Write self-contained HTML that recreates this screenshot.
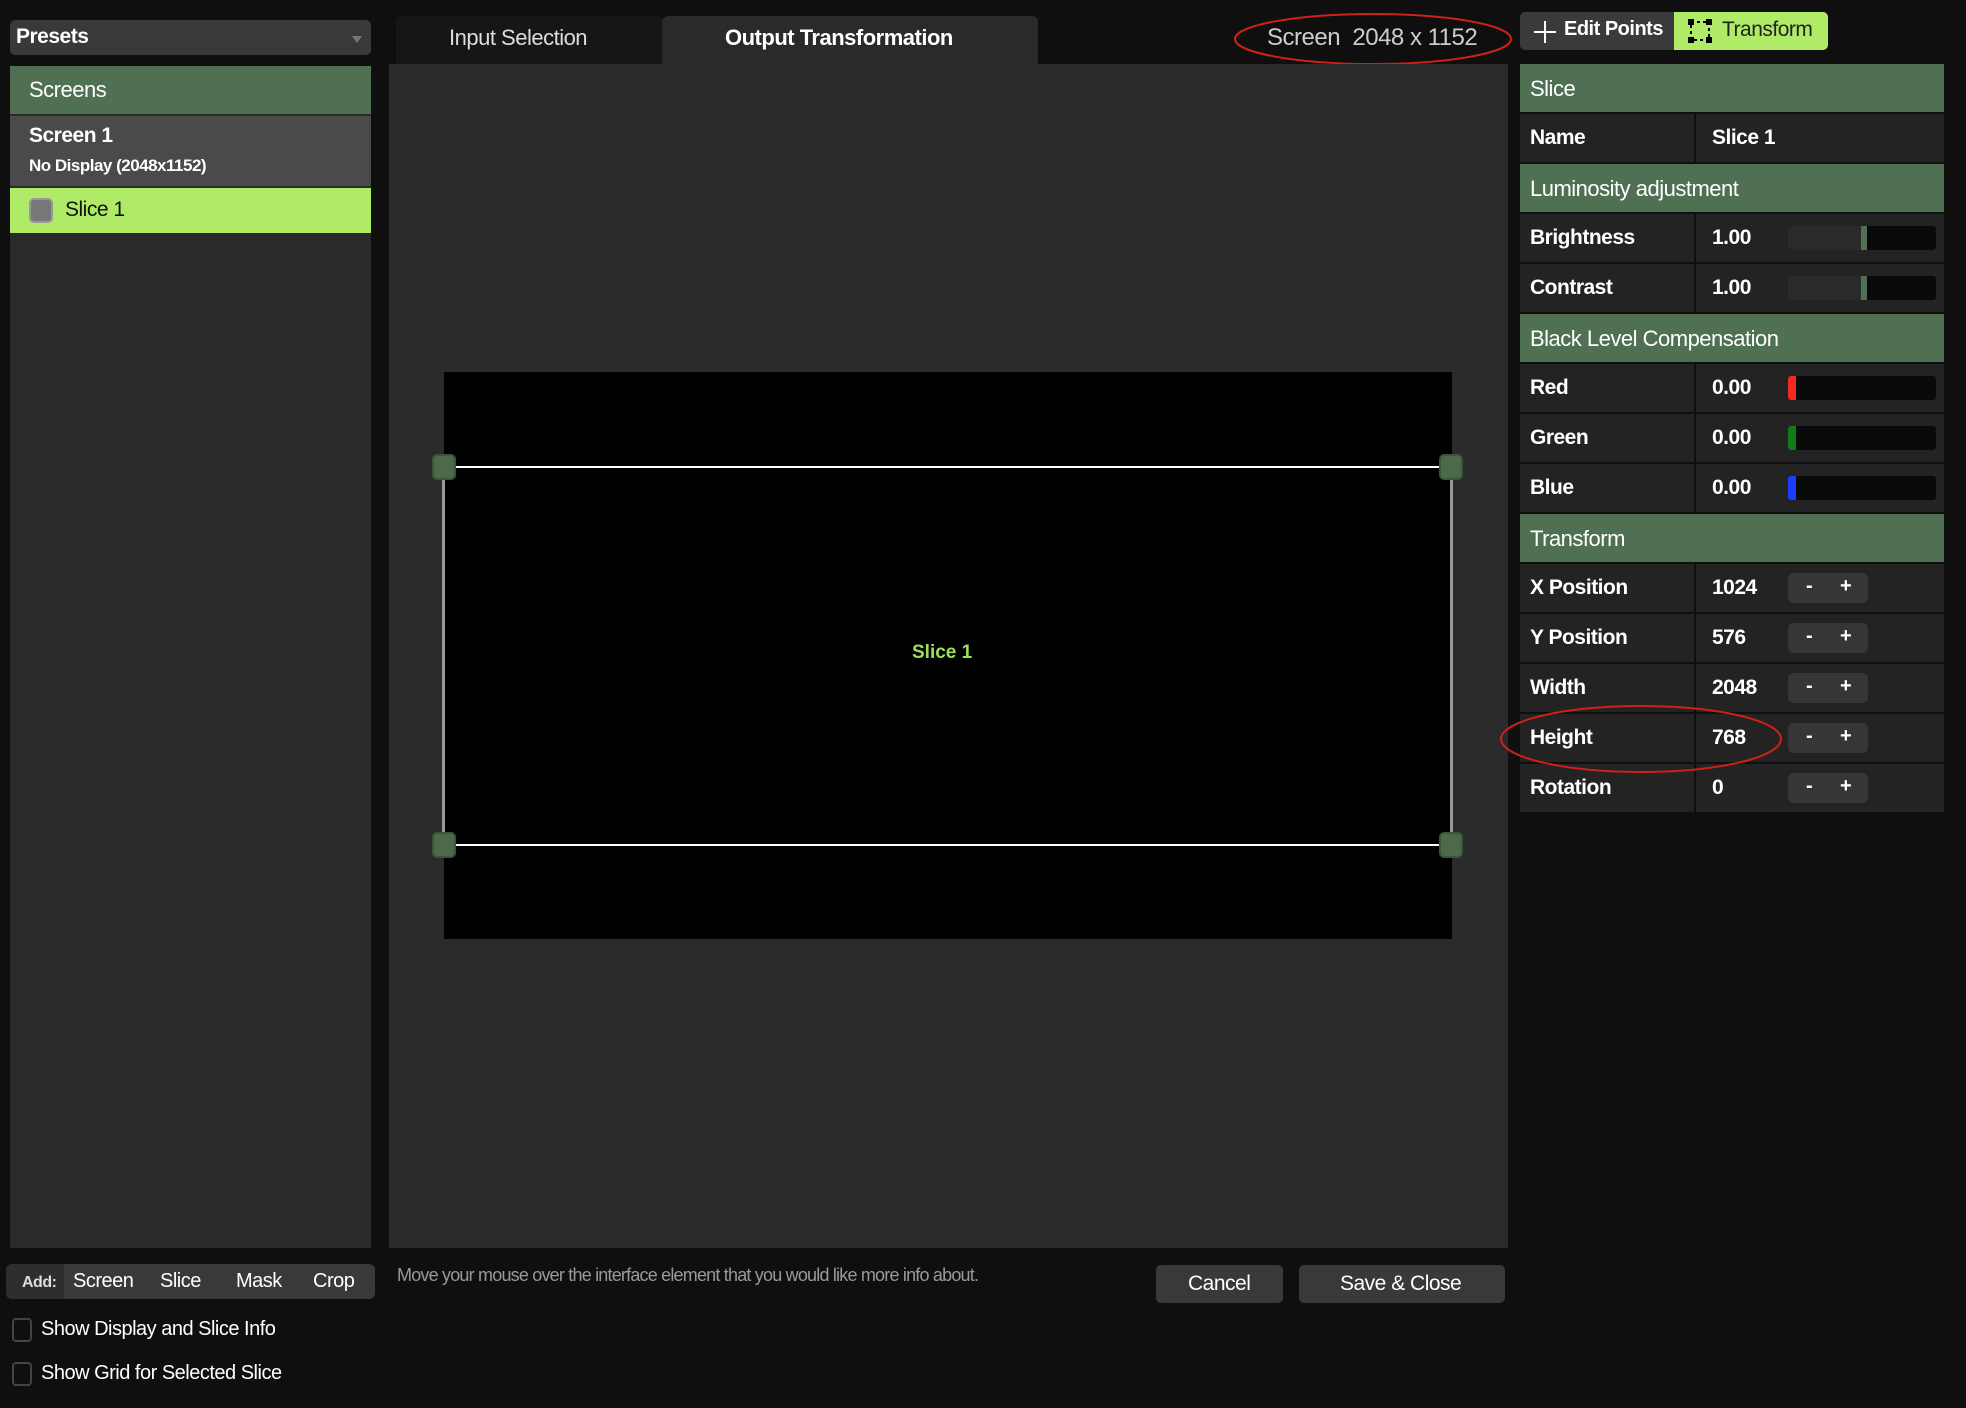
<!DOCTYPE html>
<html><head><meta charset="utf-8"><style>
*{margin:0;padding:0;box-sizing:border-box}
body{width:1966px;height:1408px;background:#0f0f0f;position:relative;overflow:hidden;font-family:"Liberation Sans",sans-serif;color:#fff}
.a{position:absolute}
.t{font-size:21px;font-weight:bold;letter-spacing:-0.5px;white-space:nowrap}
.hdr{background:#4f7052}
.row{background:#232323}
.lab{position:absolute;left:10px;top:12px}
.sl{position:absolute;left:268px;top:12px;width:148px;height:24px;border-radius:3px;background:#0a0a0a;overflow:hidden}
.pm{position:absolute;left:268px;top:9px;width:80px;height:30px;border-radius:5px;background:#363636;font-size:20px;font-weight:bold}
.pm span{position:absolute;top:2px}
.h{position:absolute;width:24px;height:26px;background:#4a6a4a;border:2px solid #3a553a;border-radius:5px}
</style></head><body>
<div class="a" style="left:10px;top:20px;width:361px;height:35px;background:#393939;border-radius:5px"></div>
<div class="a t" style="left:16px;top:25px;font-size:21px">Presets</div>
<div class="a" style="left:352px;top:36px;border:5px solid transparent;border-top:7px solid #777"></div>
<div class="a" style="left:10px;top:66px;width:361px;height:1182px;background:#2a2a2a"></div>
<div class="a hdr" style="left:10px;top:66px;width:361px;height:48px"></div>
<div class="a t" style="left:29px;top:77px;font-weight:normal;font-size:22px">Screens</div>
<div class="a" style="left:10px;top:116px;width:361px;height:70px;background:#4a4a4a"></div>
<div class="a t" style="left:29px;top:124px">Screen 1</div>
<div class="a t" style="left:29px;top:156px;font-size:17px;font-weight:bold">No Display (2048x1152)</div>
<div class="a" style="left:10px;top:188px;width:361px;height:45px;background:#b0eb68"></div>
<div class="a" style="left:29px;top:198px;width:24px;height:25px;background:#777;border:2px solid #999;border-radius:5px"></div>
<div class="a t" style="left:65px;top:198px;color:#111;font-weight:normal">Slice 1</div>
<div class="a" style="left:396px;top:16px;width:266px;height:48px;background:#161616;border-radius:6px 6px 0 0"></div>
<div class="a t" style="left:449px;top:25px;color:#ddd;font-weight:normal;font-size:22px">Input Selection</div>
<div class="a" style="left:662px;top:16px;width:376px;height:48px;background:#2a2a2a;border-radius:6px 6px 0 0"></div>
<div class="a t" style="left:725px;top:25px;font-size:22px">Output Transformation</div>
<div class="a t" style="left:1267px;top:24px;color:#ccc;font-weight:normal;font-size:24px">Screen&nbsp; 2048 x 1152</div>
<svg class="a" style="left:1230px;top:10px" width="290" height="60"><ellipse cx="143" cy="29" rx="138" ry="25" fill="none" stroke="#d0201a" stroke-width="2"/></svg>
<div class="a" style="left:389px;top:64px;width:1119px;height:1184px;background:#2a2a2a"></div>
<div class="a" style="left:444px;top:372px;width:1008px;height:567px;background:#000"></div>
<div class="a" style="left:444px;top:466px;width:1008px;height:2px;background:#fff"></div>
<div class="a" style="left:444px;top:844px;width:1008px;height:2px;background:#fff"></div>
<div class="a" style="left:442px;top:467px;width:3px;height:378px;background:#999"></div>
<div class="a" style="left:1450px;top:467px;width:3px;height:378px;background:#999"></div>
<div class="h" style="left:432px;top:454px"></div>
<div class="h" style="left:1439px;top:454px"></div>
<div class="h" style="left:432px;top:832px"></div>
<div class="h" style="left:1439px;top:832px"></div>
<div class="a" style="left:912px;top:642px;font-size:19px;font-weight:bold;color:#9be05a">Slice 1</div>
<div class="a" style="left:1520px;top:12px;width:308px;height:38px;background:#3a3a3a;border-radius:5px;overflow:hidden"><div class="a" style="left:154px;top:0;width:154px;height:38px;background:#b0eb68"></div></div>
<div class="a" style="left:1544px;top:21px;width:2px;height:22px;background:#fff"></div>
<div class="a" style="left:1534px;top:31px;width:22px;height:2px;background:#fff"></div>
<div class="a t" style="left:1564px;top:18px;font-size:20px">Edit Points</div>
<svg class="a" style="left:1688px;top:19px" width="24" height="24"><rect x="3" y="3" width="18" height="18" fill="none" stroke="#000" stroke-width="2" stroke-dasharray="3 3"/><rect x="0" y="0" width="6" height="6"/><rect x="18" y="0" width="6" height="6"/><rect x="0" y="18" width="6" height="6"/><rect x="18" y="18" width="6" height="6"/></svg>
<div class="a t" style="left:1722px;top:18px;font-size:21px;color:#222;font-weight:normal">Transform</div>
<div class="a" style="left:1508px;top:64px;width:458px;height:1184px;background:#0f0f0f"></div>
<div id="tbl"></div>
<svg class="a" style="left:1498px;top:700px" width="290" height="80"><ellipse cx="143" cy="39" rx="140" ry="33" fill="none" stroke="#d0201a" stroke-width="2"/></svg>
<div class="a" style="left:6px;top:1264px;width:369px;height:35px;background:#393939;border-radius:6px;overflow:hidden"><div style="width:58px;height:35px;background:#2e2e2e"></div></div>
<div class="a t" style="left:22px;top:1274px;font-size:16px;color:#ddd">Add:</div>
<div class="a t" style="left:73px;top:1270px;font-size:20px;font-weight:normal">Screen</div>
<div class="a t" style="left:160px;top:1270px;font-size:20px;font-weight:normal">Slice</div>
<div class="a t" style="left:236px;top:1270px;font-size:20px;font-weight:normal">Mask</div>
<div class="a t" style="left:313px;top:1270px;font-size:20px;font-weight:normal">Crop</div>
<div class="a" style="left:397px;top:1265px;font-size:18px;color:#999;letter-spacing:-0.8px">Move your mouse over the interface element that you would like more info about.</div>
<div class="a" style="left:1156px;top:1265px;width:127px;height:38px;background:#393939;border-radius:5px"></div>
<div class="a t" style="left:1188px;top:1272px;font-size:21px;font-weight:normal">Cancel</div>
<div class="a" style="left:1299px;top:1265px;width:206px;height:38px;background:#393939;border-radius:5px"></div>
<div class="a t" style="left:1340px;top:1272px;font-size:21px;font-weight:normal">Save &amp; Close</div>
<div class="a" style="left:12px;top:1318px;width:20px;height:24px;border:2px solid #444;border-radius:4px"></div>
<div class="a t" style="left:41px;top:1318px;font-size:20px;font-weight:normal">Show Display and Slice Info</div>
<div class="a" style="left:12px;top:1362px;width:20px;height:24px;border:2px solid #444;border-radius:4px"></div>
<div class="a t" style="left:41px;top:1362px;font-size:20px;font-weight:normal">Show Grid for Selected Slice</div>
<script>
var rows=[["h","Slice"],["r","Name","Slice 1"],["h","Luminosity adjustment"],["s","Brightness","1.00","#4f7052",1861,true],["s","Contrast","1.00","#4f7052",1861,true],["h","Black Level Compensation"],["s","Red","0.00","#f02a1e"],["s","Green","0.00","#157a15"],["s","Blue","0.00","#1a3cff"],["h","Transform"],["p","X Position","1024"],["p","Y Position","576"],["p","Width","2048"],["p","Height","768"],["p","Rotation","0"]];
var o="";
rows.forEach(function(r,i){var y=64+50*i;
if(r[0]=="h"){o+='<div class="a hdr" style="left:1520px;top:'+y+'px;width:424px;height:48px"><div class="lab t" style="left:10px;font-weight:normal;font-size:22px">'+r[1]+'</div></div>';return;}
o+='<div class="a row" style="left:1520px;top:'+y+'px;width:174px;height:48px"><div class="lab t">'+r[1]+'</div></div>';
o+='<div class="a row" style="left:1696px;top:'+y+'px;width:248px;height:48px"><div class="lab t" style="left:16px">'+r[2]+'</div>';
if(r[0]=="s"){
if(r[5])o+='<div class="sl" style="left:92px"><div class="a" style="left:0;top:0;width:'+(r[4]-1788)+'px;height:24px;background:#2a2a2a"></div><div class="a" style="left:'+(r[4]-1788)+'px;top:0;width:6px;height:24px;background:'+r[3]+'"></div></div>';
else o+='<div class="sl" style="left:92px"><div class="a" style="left:0;top:0;width:8px;height:24px;background:'+r[3]+'"></div></div>';}
if(r[0]=="p")o+='<div class="pm" style="left:92px"><span style="left:18px">-</span><span style="left:52px">+</span></div>';
o+='</div>';});
document.getElementById("tbl").innerHTML=o;
</script>
</body></html>
